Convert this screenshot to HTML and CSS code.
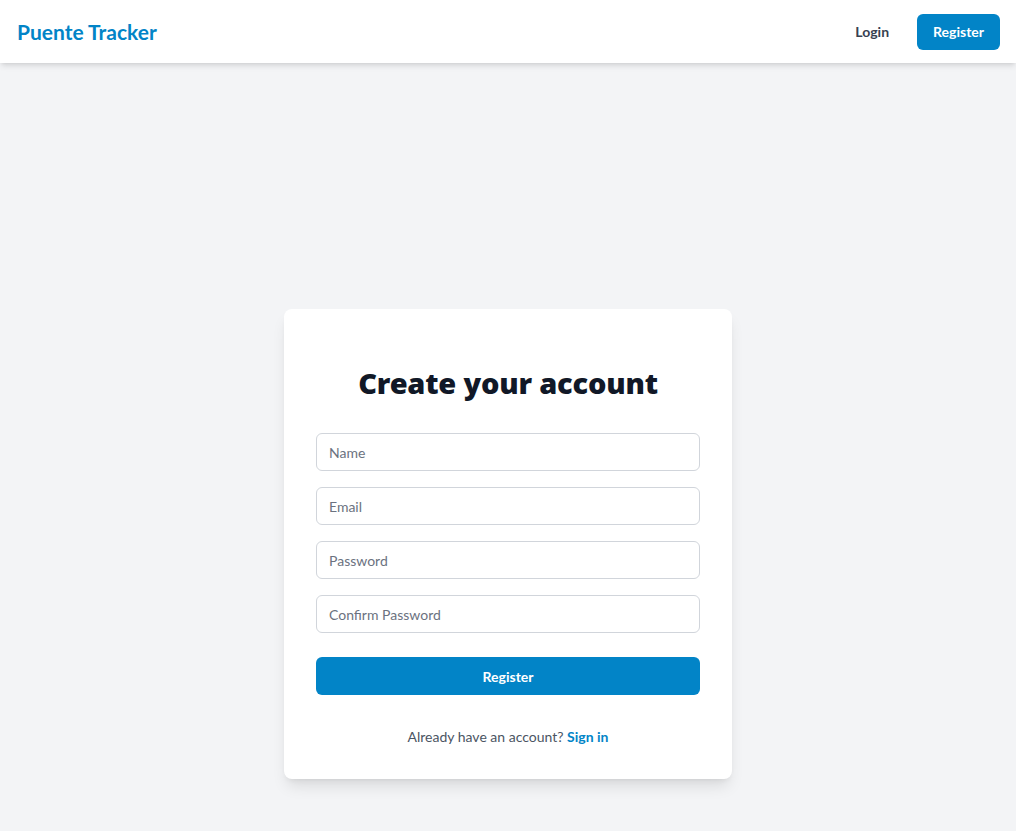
FILE: index.html
```html
<!DOCTYPE html>
<html lang="en">
<head>
<meta charset="utf-8">
<title>Puente Tracker</title>
<link rel="stylesheet" href="styles.css">
</head>
<body>
<header class="topbar">
  <a class="brand" href="#">Puente Tracker</a>
  <nav class="nav">
    <a class="nav-link" href="#">Login</a>
    <a class="nav-btn" href="#">Register</a>
  </nav>
</header>
<main class="main">
  <div class="card">
    <h1 class="title">Create your account</h1>
    <form class="form">
      <div class="fields">
        <input class="input" type="text" placeholder="Name">
        <input class="input" type="email" placeholder="Email">
        <input class="input" type="password" placeholder="Password">
        <input class="input" type="password" placeholder="Confirm Password">
      </div>
      <button class="submit" type="button">Register</button>
    </form>
    <p class="alt">Already have an account? <a class="alt-link" href="#">Sign in</a></p>
  </div>
</main>
</body>
</html>
```
FILE: styles.css
```css
* { box-sizing: border-box; }
html, body { margin: 0; padding: 0; }
body {
  background: #f3f4f6;
  font-family: "Lato", "Noto Sans", sans-serif;
  color: #111827;
  min-height: 100vh;
}
a { text-decoration: none; }
.topbar {
  height: 63px;
  background: #fff;
  display: flex;
  align-items: center;
  justify-content: space-between;
  padding: 0 16px 0 17px;
  box-shadow: 0 4px 6px -1px rgba(0,0,0,0.1), 0 2px 4px -2px rgba(0,0,0,0.1);
  position: relative;
}
.brand {
  color: #0284c7;
  font-size: 21px;
  font-weight: 700;
}
.nav { display: flex; align-items: center; gap: 28px; }
.nav-link {
  color: #374151;
  font-size: 14px;
  font-weight: 700;
}
.nav-btn {
  background: #0284c7;
  color: #fff;
  font-size: 14px;
  font-weight: 700;
  height: 36px;
  padding: 0 16px;
  border-radius: 6px;
  display: flex;
  align-items: center;
}
.main {
  display: flex;
  justify-content: center;
  padding-top: 246px;
}
.card {
  width: 448px;
  background: #fff;
  border-radius: 8px;
  padding: 32px;
  box-shadow: 0 10px 15px -3px rgba(0,0,0,0.1), 0 4px 6px -4px rgba(0,0,0,0.1);
}
.title {
  margin: 24px 0 0;
  font-family: "Noto Sans", "Lato", sans-serif;
  font-size: 29px;
  line-height: 36px;
  font-weight: 900;
  letter-spacing: -0.2px;
  text-align: center;
  color: #111827;
}
.form { margin-top: 32px; display: flex; flex-direction: column; gap: 24px; }
.fields { display: flex; flex-direction: column; gap: 16px; }
.input {
  height: 38px;
  width: 100%;
  border: 1px solid #d1d5db;
  border-radius: 6px;
  padding: 0 12px;
  font-family: inherit;
  font-size: 14px;
  color: #111827;
  background: #fff;
}
.input::placeholder { color: #6b7280; }
.submit {
  height: 38px;
  width: 100%;
  border: none;
  border-radius: 6px;
  background: #0284c7;
  color: #fff;
  font-family: inherit;
  font-size: 14px;
  font-weight: 700;
}
.alt {
  margin: 32px 0 0;
  text-align: center;
  font-size: 14px;
  line-height: 20px;
  color: #4b5563;
}
.alt-link { color: #0284c7; font-weight: 700; }
```
